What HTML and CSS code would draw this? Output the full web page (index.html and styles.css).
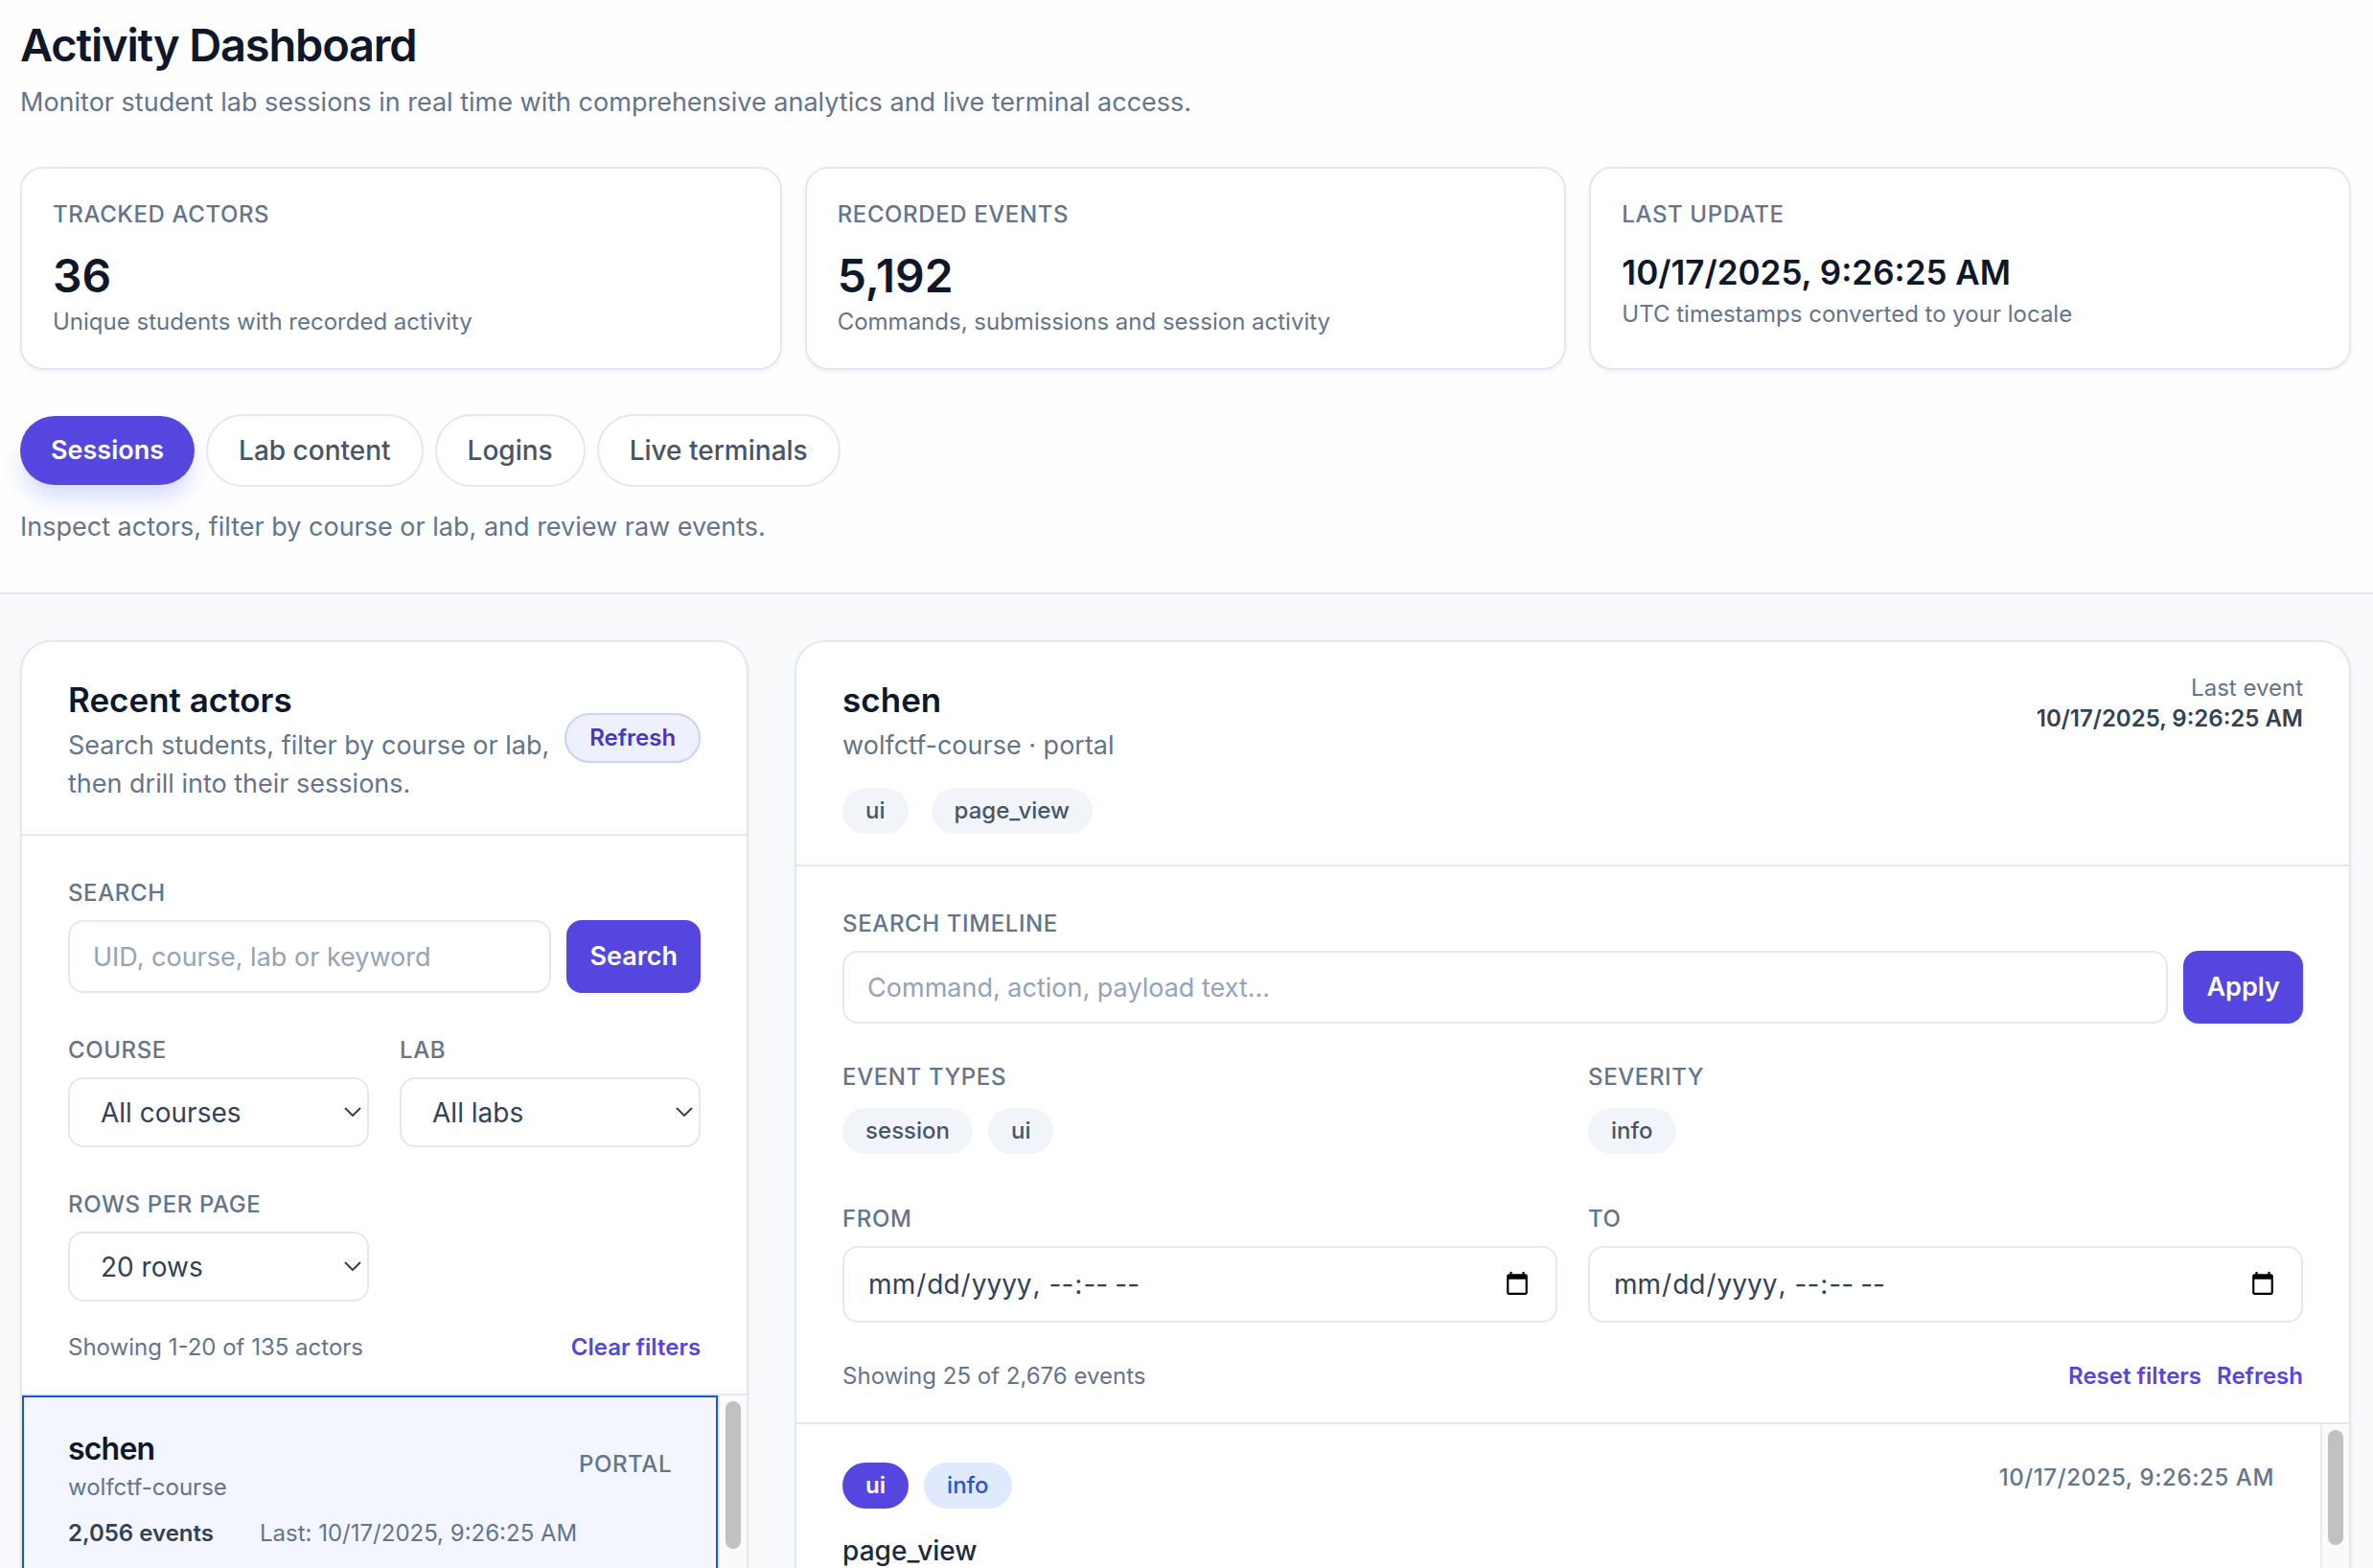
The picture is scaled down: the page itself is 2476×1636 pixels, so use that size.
FILE: index.html
```html
<!DOCTYPE html>
<html lang="en">
<head>
    <meta charset="UTF-8">
    <meta name="viewport" content="width=device-width, initial-scale=1.0">
    <title>Activity Dashboard</title>
    <link rel="stylesheet" href="styles.css">
</head>
<body>
    <header class="page-header">
        <h1>Activity Dashboard</h1>
        <p class="lead">Monitor student lab sessions in real time with comprehensive analytics and live terminal access.</p>
        <div class="stats">
            <div class="stat">
                <p class="label">Tracked actors</p>
                <p class="stat-value">36</p>
                <p class="note">Unique students with recorded activity</p>
            </div>
            <div class="stat">
                <p class="label">Recorded events</p>
                <p class="stat-value">5,192</p>
                <p class="note">Commands, submissions and session activity</p>
            </div>
            <div class="stat">
                <p class="label">Last update</p>
                <p class="stat-value stat-date">10/17/2025, 9:26:25 AM</p>
                <p class="note">UTC timestamps converted to your locale</p>
            </div>
        </div>
        <nav class="tabs">
            <button type="button" class="tab active">Sessions</button>
            <button type="button" class="tab">Lab content</button>
            <button type="button" class="tab">Logins</button>
            <button type="button" class="tab">Live terminals</button>
        </nav>
        <p class="tab-hint">Inspect actors, filter by course or lab, and review raw events.</p>
    </header>

    <main class="content">
        <section class="panel">
            <div class="panel-header centered">
                <div>
                    <h2>Recent actors</h2>
                    <p class="sub">Search students, filter by course or lab, then drill into their sessions.</p>
                </div>
                <button type="button" class="refresh">Refresh</button>
            </div>
            <form class="filters">
                <div class="field">
                    <label class="label" for="actorSearch">Search</label>
                    <div class="search-row">
                        <input type="text" id="actorSearch" placeholder="UID, course, lab or keyword">
                        <button type="button" class="primary">Search</button>
                    </div>
                </div>
                <div class="field-grid">
                    <div class="field">
                        <label class="label" for="course">Course</label>
                        <div class="select">
                            <select id="course"><option>All courses</option></select>
                            <svg viewBox="0 0 18 10"><path d="M1 1l8 8 8-8"/></svg>
                        </div>
                    </div>
                    <div class="field">
                        <label class="label" for="lab">Lab</label>
                        <div class="select">
                            <select id="lab"><option>All labs</option></select>
                            <svg viewBox="0 0 18 10"><path d="M1 1l8 8 8-8"/></svg>
                        </div>
                    </div>
                    <div class="field">
                        <label class="label" for="rows">Rows per page</label>
                        <div class="select">
                            <select id="rows"><option>20 rows</option></select>
                            <svg viewBox="0 0 18 10"><path d="M1 1l8 8 8-8"/></svg>
                        </div>
                    </div>
                </div>
                <div class="summary actor-summary">
                    <span>Showing 1-20 of 135 actors</span>
                    <button type="button" class="link">Clear filters</button>
                </div>
            </form>
            <div class="list-wrap">
                <button type="button" class="actor selected">
                    <span class="actor-top">
                        <span>
                            <span class="actor-name">schen</span>
                            <span class="note">wolfctf-course</span>
                        </span>
                        <span class="label">Portal</span>
                    </span>
                    <span class="actor-meta">
                        <strong>2,056 events</strong>
                        <span>Last: 10/17/2025, 9:26:25 AM</span>
                    </span>
                </button>
                <div class="scrollbar"><div class="thumb actor-thumb"></div></div>
            </div>
        </section>

        <section class="panel">
            <div class="panel-header">
                <div>
                    <h2>schen</h2>
                    <p class="sub">wolfctf-course · portal</p>
                    <div class="chips header-chips">
                        <span class="chip">ui</span>
                        <span class="chip">page_view</span>
                    </div>
                </div>
                <div class="last-event">
                    <p>Last event</p>
                    <p class="last-date">10/17/2025, 9:26:25 AM</p>
                </div>
            </div>
            <form class="filters">
                <div class="field">
                    <label class="label" for="timelineSearch">Search timeline</label>
                    <div class="search-row">
                        <input type="text" id="timelineSearch" placeholder="Command, action, payload text...">
                        <button type="button" class="primary">Apply</button>
                    </div>
                </div>
                <div class="field-grid timeline-grid">
                    <div>
                        <p class="label">Event types</p>
                        <div class="chips">
                            <button type="button" class="chip">session</button>
                            <button type="button" class="chip">ui</button>
                        </div>
                    </div>
                    <div>
                        <p class="label">Severity</p>
                        <div class="chips">
                            <button type="button" class="chip">info</button>
                        </div>
                    </div>
                    <div class="field">
                        <label class="label" for="from">From</label>
                        <input type="datetime-local" id="from">
                    </div>
                    <div class="field">
                        <label class="label" for="to">To</label>
                        <input type="datetime-local" id="to">
                    </div>
                </div>
                <div class="summary">
                    <span>Showing 25 of 2,676 events</span>
                    <span class="links">
                        <button type="button" class="link">Reset filters</button>
                        <button type="button" class="link">Refresh</button>
                    </span>
                </div>
            </form>
            <div class="list-wrap">
                <article class="event">
                    <div class="event-top">
                        <div class="chips">
                            <span class="chip type">ui</span>
                            <span class="chip info">info</span>
                        </div>
                        <time class="label">10/17/2025, 9:26:25 AM</time>
                    </div>
                    <p class="event-title">page_view</p>
                </article>
                <div class="scrollbar"><div class="thumb event-thumb"></div></div>
            </div>
        </section>
    </main>
</body>
</html>
```
FILE: styles.css
```css
* {
    box-sizing: border-box;
}
body {
    display: flex;
    flex-direction: column;
    height: 100vh;
    margin: 0;
    overflow: hidden;
    font-family: Inter, "Liberation Sans", sans-serif;
    font-size: 27px;
    line-height: 40px;
    background-color: #f8fafc;
    color: #0f172a;
}
h1, h2, p {
    margin: 0;
}
button, input, select {
    font: inherit;
    color: inherit;
}
button {
    margin: 0;
    padding: 0;
    border: none;
    background: none;
    cursor: pointer;
}
.page-header {
    flex: none;
    padding: 15px 23px 48px 21px;
    background-color: #fefefe;
    border-bottom: 2px solid #e2e8f0;
}
h1 {
    font-size: 47px;
    line-height: 64px;
    font-weight: 600;
    letter-spacing: -0.025em;
}
.lead {
    margin-top: 8px;
    color: #64748b;
}
.stats {
    display: grid;
    grid-template-columns: repeat(3, 1fr);
    gap: 24px;
    margin: 47px 0 46px;
}
.stat {
    padding: 32px;
    background: #fff;
    border: 2px solid #e2e8f0;
    border-radius: 24px;
    box-shadow: 0 2px 4px rgba(15, 23, 42, 0.05);
}
.label {
    font-size: 24px;
    line-height: 32px;
    font-weight: 500;
    letter-spacing: 0.025em;
    text-transform: uppercase;
    color: #64748b;
}
.stat-value {
    margin-top: 16px;
    font-size: 48px;
    line-height: 64px;
    font-weight: 600;
}
.stat-date {
    font-size: 35px;
    line-height: 56px;
}
.note {
    font-size: 24px;
    line-height: 32px;
    color: #64748b;
}
.tabs {
    display: flex;
    align-items: center;
    gap: 12px;
}
.tab {
    padding: 16px 32px;
    border: 2px solid #e2e8f0;
    border-radius: 38px;
    background: #fff;
    font-size: 28px;
    font-weight: 500;
    color: #475569;
}
.tab.active {
    border: none;
    background-color: #5546df;
    color: #fff;
    font-size: 27px;
    font-weight: 600;
    box-shadow: 0 16px 24px -4px #d3d8fd;
}
.tab-hint {
    margin-top: 22px;
    color: #64748b;
}

.content {
    flex: 1;
    min-height: 0;
    display: grid;
    grid-template-columns: 22fr 47fr;
    gap: 48px;
    padding: 48px 23px 0 21px;
}
.panel {
    display: flex;
    flex-direction: column;
    min-width: 0;
    min-height: 0;
    overflow: hidden;
    background: #fff;
    border: 2px solid #e2e8f0;
    border-bottom: none;
    border-radius: 32px 32px 0 0;
    box-shadow: 0 2px 4px rgba(15, 23, 42, 0.05);
}
.panel-header {
    display: flex;
    justify-content: space-between;
    align-items: flex-start;
    padding: 32px 48px;
    border-bottom: 2px solid #e2e8f0;
}
.panel-header.centered {
    align-items: center;
}
h2 {
    font-size: 35px;
    line-height: 56px;
    font-weight: 600;
}
.sub {
    color: #64748b;
}
.refresh {
    padding: 8px 24px;
    border: 2px solid #c7d2fe;
    border-radius: 26px;
    background-color: #eef0fe;
    font-size: 24px;
    line-height: 32px;
    font-weight: 600;
    color: #4537c1;
}
.last-event {
    text-align: right;
    font-size: 24px;
    line-height: 32px;
    color: #64748b;
}
.last-date {
    font-weight: 600;
    color: #334155;
}

.filters {
    display: flex;
    flex-direction: column;
    gap: 40px;
    padding: 40px 48px 32px;
    border-bottom: 2px solid #e2e8f0;
}
.field {
    display: flex;
    flex-direction: column;
    gap: 8px;
}
.field .label {
    line-height: 40px;
}
.search-row {
    display: flex;
    gap: 16px;
}
input {
    width: 100%;
    min-width: 0;
    height: 76px;
    padding: 0 24px;
    border: 2px solid #e2e8f0;
    border-radius: 16px;
    background: #fff;
    color: #334155;
}
input::placeholder {
    color: #94a3b8;
}
input[type="datetime-local"] {
    height: 80px;
    font-size: 28px;
}
.primary {
    padding: 0 24px;
    border-radius: 16px;
    background-color: #5546df;
    color: #fff;
    font-weight: 600;
    box-shadow: 0 2px 4px rgba(15, 23, 42, 0.05);
}
.field-grid {
    display: grid;
    grid-template-columns: 1fr 1fr;
    gap: 40px 32px;
}
.timeline-grid {
    row-gap: 48px;
}
.select {
    position: relative;
}
.select select {
    display: block;
    width: 100%;
    height: 73px;
    padding: 0 32px;
    border: 2px solid #e2e8f0;
    border-radius: 16px;
    background: #fff;
    font-size: 28px;
    color: #334155;
    appearance: none;
}
.select svg {
    position: absolute;
    top: 31px;
    right: 8px;
    width: 18px;
    height: 10px;
    fill: none;
    stroke: #334155;
    stroke-width: 2;
    pointer-events: none;
}
.summary {
    display: flex;
    justify-content: space-between;
    font-size: 24px;
    line-height: 32px;
    color: #64748b;
}
.actor-summary {
    margin-top: -8px;
}
.links {
    display: flex;
    gap: 16px;
}
.link {
    font-weight: 600;
    color: #5546df;
}
.chips {
    display: flex;
    gap: 16px;
    margin-top: 16px;
}
.header-chips {
    gap: 24px;
    margin-top: 24px;
}
.chip {
    padding: 8px 24px;
    border-radius: 24px;
    background-color: #f1f5f9;
    font-size: 24px;
    line-height: 32px;
    font-weight: 500;
    color: #475569;
}
.chip.type {
    background-color: #5546df;
    color: #fff;
    font-weight: 600;
}
.chip.info {
    background-color: #dfeafe;
    color: #3050d3;
}

.list-wrap {
    flex: 1;
    min-height: 0;
    display: flex;
}
.actor {
    flex: 1;
    align-self: flex-start;
    padding: 32px 48px;
    text-align: left;
}
.actor.selected {
    background-color: #f3f6fe;
    outline: 2px solid #1f56cc;
    outline-offset: -2px;
}
.actor-top {
    display: flex;
    justify-content: space-between;
    align-items: center;
}
.actor-name, .actor .note {
    display: block;
}
.actor-name {
    font-size: 32px;
    line-height: 48px;
    font-weight: 600;
    letter-spacing: -0.025em;
}
.actor-meta {
    display: flex;
    gap: 48px;
    margin-top: 16px;
    font-size: 24px;
    line-height: 32px;
    color: #64748b;
}
.actor-meta strong {
    font-weight: 600;
    color: #334155;
}
.event {
    flex: 1;
    padding: 40px 48px;
}
.event-top {
    display: flex;
    justify-content: space-between;
    align-items: flex-start;
}
.event-top .chips {
    margin-top: 0;
}
.event-title {
    margin-top: 24px;
    font-size: 28px;
    font-weight: 500;
    color: #1e293b;
}
.scrollbar {
    flex: none;
    width: 30px;
    padding: 6px;
    background-color: #fafafa;
    border-left: 2px solid #e8e8e8;
}
.thumb {
    width: 16px;
    border-radius: 8px;
    background-color: #c1c1c1;
}
.actor-thumb {
    height: 154px;
}
.event-thumb {
    height: 120px;
}
```
